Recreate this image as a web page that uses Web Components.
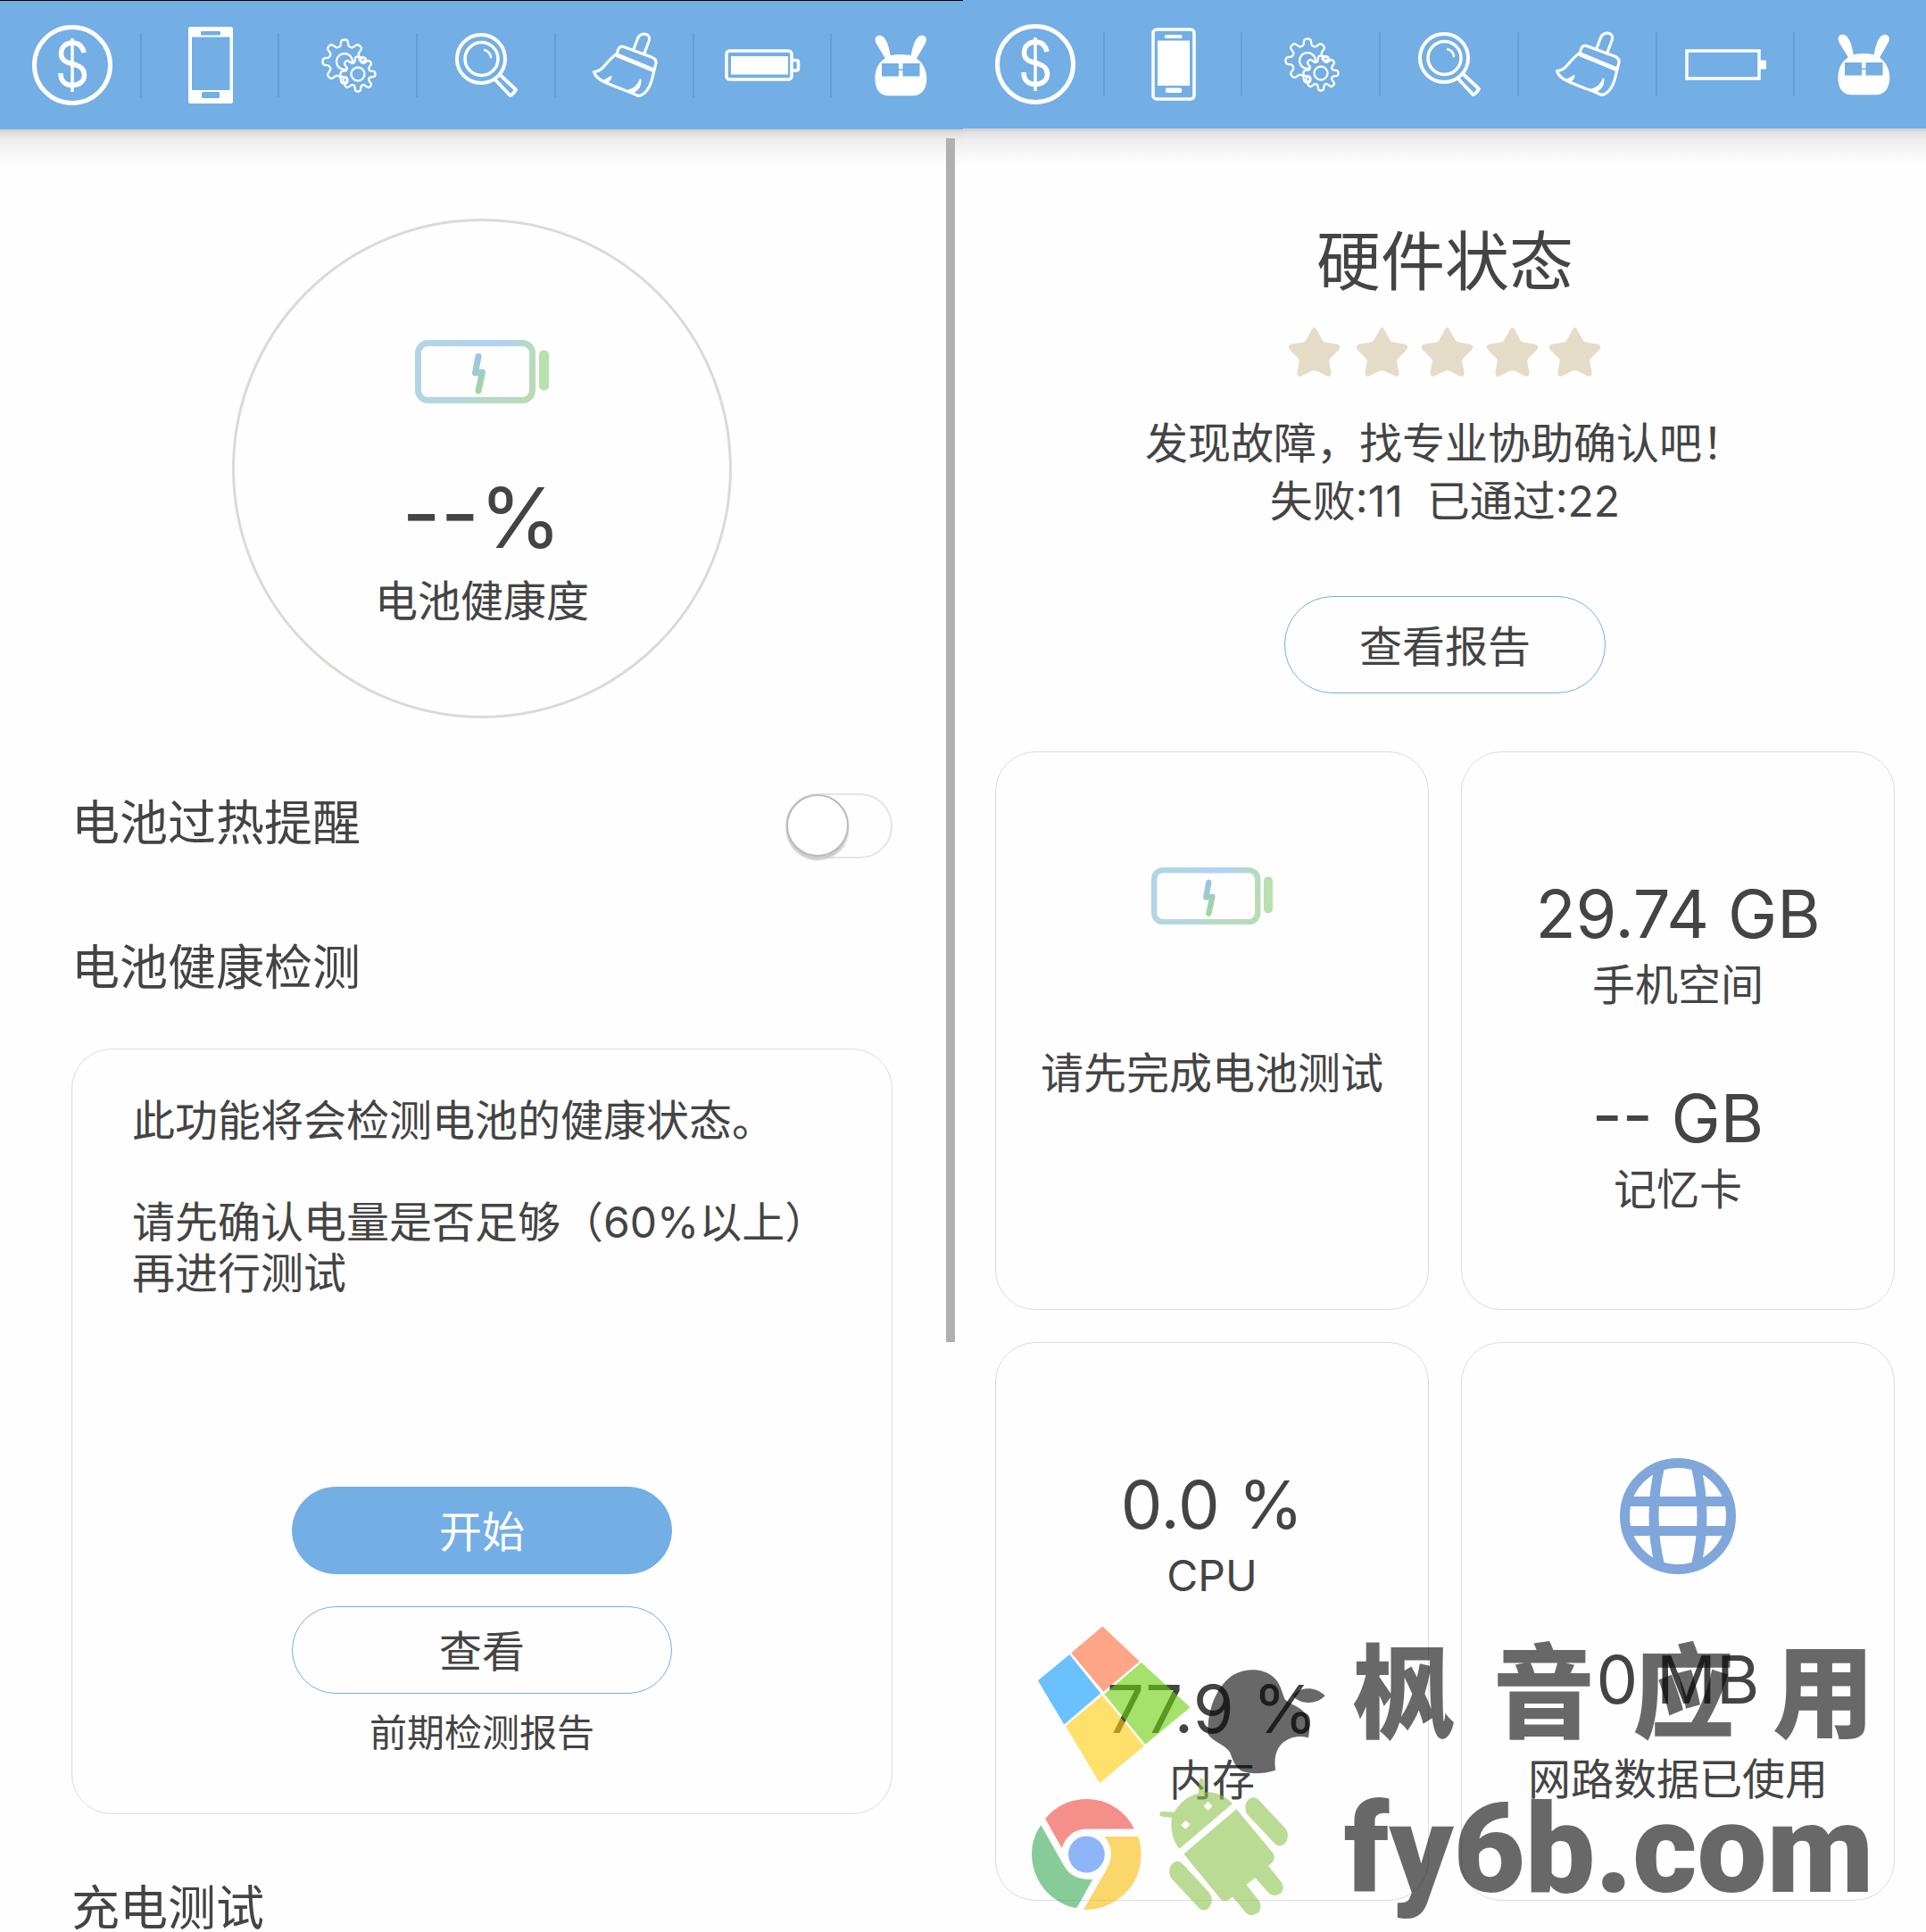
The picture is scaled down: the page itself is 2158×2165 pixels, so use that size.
<!DOCTYPE html>
<html lang="zh-CN">
<head>
<meta charset="utf-8">
<title>硬件状态</title>
<style>
  body {
    margin: 0;
    background: #fefefe;
    color: #444;
    font-family: Inter, "Noto Sans CJK SC", sans-serif;
    font-size: 48px;
  }
</style>
</head>
<body>
<device-page>
  <phone-screen slot="left" scrolled>
    <tool-bar slot="bar" phone="solid" battery="full" topline></tool-bar>
    <battery-panel></battery-panel>
  </phone-screen>
  <phone-screen slot="right">
    <tool-bar slot="bar" phone="outline" battery="empty"></tool-bar>
    <hardware-panel></hardware-panel>
  </phone-screen>
  <brand-mark slot="mark"></brand-mark>
</device-page>

<script>
// outline of a gear with soft teeth
function gearPath(cx, cy, inner, outer, teeth, turn) {
  const mid = (inner + outer) / 2;
  const amp = (outer - inner) / 2;
  let d = '';
  for (let i = 0; i < 240; i++) {
    const a = (i / 240) * Math.PI * 2;
    const r = mid + amp * Math.tanh(2 * Math.cos(teeth * (a - turn))) / Math.tanh(2);
    d += (i ? 'L' : 'M') + (cx + r * Math.cos(a)).toFixed(1) + ' ' + (cy + r * Math.sin(a)).toFixed(1);
  }
  return d + 'Z';
}

const ICONS = {
  coin: `<svg width="92" height="92" fill="none" stroke="#fff">
    <circle cx="46" cy="46" r="42.5" stroke-width="5"/>
    <path stroke-width="5.5" d="M59 32C57.5 25 53 21 46 21C38.5 21 33.5 26 33.5 33C33.5 40 38 42.5 46 44.5C54 46.5 59.5 49.5 59.5 57C59.5 64 54 68.5 46 68.5C38 68.5 33 64 33 55"/>
    <path stroke-width="3.5" d="M46 16V76"/></svg>`,
  phoneSolid: `<svg width="50" height="86">
    <rect width="50" height="86" rx="2.5" fill="#fff"/>
    <g fill="#73aee5"><rect x="4" y="11.5" width="42.5" height="59.5" rx="1"/>
    <rect x="14" y="5" width="22" height="4.5" rx="1"/><rect x="15" y="73" width="20" height="7" rx="1.5"/></g></svg>`,
  phoneOutline: `<svg width="50" height="82">
    <rect x="2" y="2" width="46" height="78" rx="4" fill="none" stroke="#fff" stroke-width="3.5"/>
    <g fill="#fff"><rect x="15" y="8" width="19.5" height="4" rx="1.5"/>
    <rect x="7" y="14.5" width="36" height="50.5"/><rect x="16" y="67.5" width="18" height="5.5" rx="1.5"/></g></svg>`,
  gears: `<svg width="62" height="62" fill="none" stroke="#fff" stroke-width="2.3">
    <path d="${gearPath(26, 27, 17.5, 24.5, 8, 0)}"/><circle cx="26" cy="27" r="9"/>
    <path fill="#73aee5" d="${gearPath(41, 41, 13.5, 19.5, 8, 0)}"/><circle cx="41" cy="41" r="7.5"/>
    <ellipse cx="46" cy="24.5" rx="3.5" ry="2.5"/><ellipse cx="27" cy="48" rx="2.5" ry="3.5"/></svg>`,
  search: `<svg width="72" height="74" fill="none" stroke="#fff">
    <circle cx="30" cy="30" r="27" stroke-width="4"/><circle cx="30.5" cy="30" r="18.5" stroke-width="3.5"/>
    <path stroke-width="2.5" stroke-linecap="round" d="M34 20Q40 22 41 28"/>
    <path stroke-width="3.8" stroke-linejoin="round" d="M52 48.5L69 64.5Q66 70 62.5 71L46 53.5"/></svg>`,
  broom: `<svg width="76" height="76" fill="none" stroke="#fff" stroke-width="3.2" stroke-linejoin="round" stroke-linecap="round">
    <path d="M48 20L53 7C57 1 67 2 65.5 10L59.5 26"/>
    <path d="M29.5 25C30 19 33 16 37 17.5L68 29C73 31 74 34 72.5 38L71 43"/>
    <path stroke-width="5" d="M30 27L70 43.5"/>
    <path d="M28 26C16 35 14 45 3.5 45.5C5 51 9 54 15.5 57C28 63 40 66 53.5 72.5C66 70 69 53 71 43"/>
    <path fill="#fff" stroke-width="2" d="M14 56L22.5 51Q21.5 56 17 57ZM41 67Q52 64 55.5 54.5Q56 65 46 69Z"/></svg>`,
  batteryFull: `<svg width="85" height="36" fill="none" stroke="#fff" stroke-width="3.5">
    <rect x="2" y="2" width="73" height="32" rx="3.5"/><rect x="7" y="8" width="64" height="20.5" fill="#fff" stroke="none"/>
    <path d="M76 12.5H80Q82.5 12.5 82.5 14.5V22Q82.5 24 80 24H76"/></svg>`,
  batteryEmpty: `<svg width="91" height="35" fill="none" stroke="#fff" stroke-width="3.5">
    <rect x="2" y="2" width="81" height="31"/><rect x="84" y="12.5" width="7" height="10" fill="#fff" stroke="none"/></svg>`,
  rabbit: `<svg width="62" height="70">
    <path fill="#fff" d="M14 27.5L4.5 12C-1 3 7 -1 12 3.5C17 9 18 16 20 25ZM49 27.5L58 12C63.5 3 55.5 -1 50.5 3.5C45.5 9 44.5 16 42.5 25Z"/>
    <path fill="#fff" d="M2.4 50C2.4 38 8 31 14 27C20 21.5 42 21.5 48.5 27C54 31 60.3 38 60.3 50C60.3 62 54 69.3 45 69.3H17.5C8 69.3 2.4 62 2.4 50Z"/>
    <path fill="#73aee5" d="M10 33H29V39.5H33.5V33H52.5V47.5H33.5V41H29V47.5H10Z"/></svg>`,
};

customElements.define('device-page', class extends HTMLElement {
  constructor() {
    super();
    this.attachShadow({ mode: 'open' });
    this.shadowRoot.innerHTML = `
      <style>
        :host {
          position: relative;
          display: grid;
          grid-template-columns: 1fr 1fr;
          min-height: 100vh;
        }
      </style>
      <slot name="left"></slot>
      <slot name="right"></slot>
      <slot name="mark"></slot>
    `;
  }
});

customElements.define('phone-screen', class extends HTMLElement {
  constructor() {
    super();
    this.attachShadow({ mode: 'open' });
    this.shadowRoot.innerHTML = `
      <style>
        :host { display: block; position: relative; min-width: 0; }
        .thumb { display: none; }
        :host([scrolled]) .thumb {
          display: block;
          position: absolute;
          top: 155px;
          right: 9px;
          width: 10px;
          height: 1349px;
          background: #b0b0b0;
        }
      </style>
      <slot name="bar"></slot>
      <main><slot></slot></main>
      <div class="thumb"></div>
    `;
  }
});

customElements.define('tool-bar', class extends HTMLElement {
  connectedCallback() {
    this.attachShadow({ mode: 'open' });
    const items = [
      ['收益', ICONS.coin],
      ['手机', this.getAttribute('phone') === 'solid' ? ICONS.phoneSolid : ICONS.phoneOutline],
      ['设置', ICONS.gears],
      ['检测', ICONS.search],
      ['清理', ICONS.broom],
      ['电池', this.getAttribute('battery') === 'full' ? ICONS.batteryFull : ICONS.batteryEmpty],
      ['助手', ICONS.rabbit],
    ];
    this.shadowRoot.innerHTML = `
      <style>
        :host { display: block; position: relative; }
        :host([topline]) { border-top: 1px solid #000; }
        nav {
          display: grid;
          grid-template-columns: repeat(6, 155fr) 147fr;
          height: 144px;
          padding-left: 4px;
          background: #73aee5;
        }
        a {
          display: flex;
          align-items: center;
          justify-content: center;
          position: relative;
        }
        a:last-child { padding-left: 6px; }
        a:not(:last-child)::after {
          content: "";
          position: absolute;
          right: 0;
          top: 36px;
          width: 2px;
          height: 72px;
          background: #669fd1;
        }
        svg { display: block; flex: none; }
        /* drop shadow falls over the content below */
        .shade {
          position: absolute;
          top: 100%;
          left: 0;
          right: 0;
          height: 40px;
          border-top: 3px solid #d4d4d4;
          background: linear-gradient(#dfdfdf, #eee 10px, #f8f8f8 24px, #fefefe);
        }
      </style>
      <nav>${items.map(([name, icon]) => `<a href="#" aria-label="${name}">${icon}</a>`).join('')}</nav>
      <div class="shade"></div>
    `;
  }
});

customElements.define('battery-icon', class extends HTMLElement {
  constructor() {
    super();
    this.attachShadow({ mode: 'open' });
    this.shadowRoot.innerHTML = `
      <style>
        :host { display: block; width: 150px; }
        svg { display: block; width: 100%; }
      </style>
      <svg viewBox="0 0 150 71" fill="none">
        <defs>
          <linearGradient id="body" x1="0" y1="0" x2="135" y2="71" gradientUnits="userSpaceOnUse">
            <stop offset="0" stop-color="#b1d4ec"/><stop offset=".5" stop-color="#b4d7d6"/><stop offset="1" stop-color="#b8dcae"/>
          </linearGradient>
          <radialGradient id="glow" cx="80" cy="3" r="46" gradientUnits="userSpaceOnUse">
            <stop offset="0" stop-color="#b1cfff"/><stop offset="1" stop-color="#b1cfff" stop-opacity="0"/>
          </radialGradient>
          <linearGradient id="bolt" x1="0" y1="15" x2="0" y2="60" gradientUnits="userSpaceOnUse">
            <stop offset="0" stop-color="#9bc2f1"/><stop offset="1" stop-color="#a3d898"/>
          </linearGradient>
        </defs>
        <rect x="3.5" y="3.5" width="128" height="64" rx="11" stroke="url(#body)" stroke-width="7"/>
        <rect x="3.5" y="3.5" width="128" height="64" rx="11" stroke="url(#glow)" stroke-width="7"/>
        <rect x="139" y="11.5" width="11" height="45" rx="5" fill="#b8e0ad"/>
        <path d="M71 18.5L67.5 37L75.5 36L71 57" stroke="url(#bolt)" stroke-width="7" stroke-linecap="round" stroke-linejoin="round"/>
      </svg>
    `;
  }
});

customElements.define('pill-button', class extends HTMLElement {
  constructor() {
    super();
    this.attachShadow({ mode: 'open' });
    this.shadowRoot.innerHTML = `
      <style>
        :host { display: block; width: 426px; height: 98px; }
        button {
          width: 100%;
          height: 100%;
          padding: 0 0 4px;
          border: 1px solid #73aee5;
          border-radius: 54px;
          background: none;
          color: inherit;
          font: inherit;
        }
        :host([primary]) button { background: #73aee5; color: #fff; }
      </style>
      <button type="button"><slot></slot></button>
    `;
  }
});

customElements.define('toggle-row', class extends HTMLElement {
  constructor() {
    super();
    this.attachShadow({ mode: 'open' });
    this.shadowRoot.innerHTML = `
      <style>
        :host { display: block; }
        .row { display: flex; justify-content: space-between; align-items: flex-start; }
        label { padding-top: 6px; font-size: 54px; line-height: 56px; }
        input {
          appearance: none;
          flex: none;
          width: 120px;
          height: 73px;
          margin: 0;
          border: 2px solid #e4e4e4;
          border-radius: 37px;
        }
        input::before {
          content: "";
          display: block;
          box-sizing: border-box;
          width: 70px;
          height: 70px;
          margin: -1px;
          border: 2px solid #bbb;
          border-radius: 50%;
          background: #fff;
          box-shadow: 0 4px 2px #ccc;
        }
      </style>
      <div class="row">
        <label for="toggle"><slot></slot></label>
        <input type="checkbox" id="toggle" role="switch">
      </div>
    `;
  }
});

customElements.define('info-card', class extends HTMLElement {
  constructor() {
    super();
    this.attachShadow({ mode: 'open' });
    this.shadowRoot.innerHTML = `
      <style>
        :host {
          display: flex;
          flex-direction: column;
          align-items: center;
          box-sizing: border-box;
          border: 1px solid #dcdcdc;
          border-radius: 45px;
        }
      </style>
      <slot></slot>
    `;
  }
});

customElements.define('stat-value', class extends HTMLElement {
  constructor() {
    super();
    this.attachShadow({ mode: 'open' });
    this.shadowRoot.innerHTML = `
      <style>
        :host { display: flex; flex-direction: column; align-items: center; gap: 8px; }
        .value { font-size: 74px; line-height: 84px; }
        .label { line-height: 60px; }
        :host([wide]) { gap: 40px; }
      </style>
      <div class="value">${this.getAttribute('value')}</div>
      <div class="label"><slot></slot></div>
    `;
  }
});

customElements.define('star-rating', class extends HTMLElement {
  constructor() {
    super();
    this.attachShadow({ mode: 'open' });
    const star = 'M25.5 3Q28.5 -3 31.5 3L37.5 14Q38.5 16 41 16.5L53 18.5Q59.5 20 56 25L46.5 34.5Q45 36 45.3 38.5L47.5 50Q48 56 43 54.5L32 49Q28.5 47.5 25 49L14 54.5Q9 56 9.5 50L11.7 38.5Q12 36 10.5 34.5L1 25Q-2.5 20 4 18.5L16 16.5Q18.5 16 19.5 14Z';
    this.shadowRoot.innerHTML = `
      <style>
        :host { display: block; }
        svg { display: block; }
      </style>
      <svg width="356" height="55" fill="#e5dcc8">
        ${[3, 79, 152, 225, 295].map(x => `<path transform="translate(${x} 0)" d="${star}"/>`).join('')}
      </svg>
    `;
  }
});

customElements.define('battery-panel', class extends HTMLElement {
  constructor() {
    super();
    this.attachShadow({ mode: 'open' });
    this.shadowRoot.innerHTML = `
      <style>
        :host { display: block; padding: 100px 79px 0 80px; }
        .gauge {
          display: flex;
          flex-direction: column;
          align-items: center;
          box-sizing: border-box;
          width: 560px;
          height: 560px;
          margin: 0 auto;
          padding-top: 133px;
          border: 3px solid #dadad6;
          border-radius: 50%;
        }
        .percent { margin-top: 83px; font-size: 94px; line-height: 90px; }
        .caption { margin-top: 19px; line-height: 60px; }
        toggle-row { margin-top: 84px; }
        h2 { margin: 95px 0 0; font-size: 54px; line-height: 56px; font-weight: 400; }
        h2.next { margin-top: 81px; line-height: 50px; }
        info-card { margin-top: 62px; padding: 51px 67px 65px; gap: 36px; }
        p { align-self: stretch; margin: 0 0 175px; line-height: 57px; white-space: pre-line; }
        .note { margin-top: -17px; font-size: 42px; line-height: 50px; }
      </style>
      <div class="gauge">
        <battery-icon></battery-icon>
        <div class="percent">--%</div>
        <div class="caption">电池健康度</div>
      </div>
      <toggle-row>电池过热提醒</toggle-row>
      <h2>电池健康检测</h2>
      <info-card>
        <p>此功能将会检测电池的健康状态。

请先确认电量是否足够（60%以上）再进行测试</p>
        <pill-button primary>开始</pill-button>
        <pill-button>查看</pill-button>
        <div class="note">前期检测报告</div>
      </info-card>
      <h2 class="next">充电测试</h2>
    `;
  }
});

customElements.define('hardware-panel', class extends HTMLElement {
  constructor() {
    super();
    this.attachShadow({ mode: 'open' });
    this.shadowRoot.innerHTML = `
      <style>
        :host {
          display: flex;
          flex-direction: column;
          align-items: center;
          padding: 104px 35px 0 36px;
        }
        h1 { margin: 0; font-size: 72px; line-height: 90px; font-weight: 400; }
        star-rating { margin-top: 29px; }
        p { margin: 42px 0 0; line-height: 65px; text-align: center; }
        pill-button { width: 360px; height: 109px; margin-top: 74px; }
        .cards {
          align-self: stretch;
          display: grid;
          grid-template-columns: 1fr 1fr;
          grid-auto-rows: 626px;
          gap: 36px;
          margin-top: 65px;
        }
        .values { padding-top: 139px; gap: 77px; }
        .media { padding-top: 129px; }
        .media battery-icon { width: 136px; }
        .hint { margin-top: 137px; line-height: 60px; }
        .media stat-value { margin-top: 76px; }
      </style>
      <h1>硬件状态</h1>
      <star-rating></star-rating>
      <p>发现故障，找专业协助确认吧！<br>失败:11&nbsp; 已通过:22</p>
      <pill-button>查看报告</pill-button>
      <div class="cards">
        <info-card class="media">
          <battery-icon></battery-icon>
          <div class="hint">请先完成电池测试</div>
        </info-card>
        <info-card class="values">
          <stat-value value="29.74 GB">手机空间</stat-value>
          <stat-value value="-- GB">记忆卡</stat-value>
        </info-card>
        <info-card class="values">
          <stat-value value="0.0 %">CPU</stat-value>
          <stat-value value="77.9 %">内存</stat-value>
        </info-card>
        <info-card class="media">
          <svg width="130" height="130" fill="none" stroke="#80a7dc" stroke-width="11">
            <circle cx="65" cy="65" r="59.5"/>
            <path d="M45 8Q31 65 45 122M85 8Q99 65 85 122M8 48.5H122M8 81.5H122"/>
          </svg>
          <stat-value wide value="0 MB">网路数据已使用</stat-value>
        </info-card>
      </div>
    `;
  }
});

customElements.define('brand-mark', class extends HTMLElement {
  constructor() {
    super();
    this.attachShadow({ mode: 'open' });
    this.shadowRoot.innerHTML = `
      <style>
        :host {
          position: absolute;
          right: 58px;
          bottom: 18px;
          display: flex;
          align-items: flex-end;
          gap: 20px;
          opacity: .6;
          color: #050505;
          pointer-events: none;
        }
        .words { width: 594px; }
        .name {
          display: flex;
          justify-content: space-between;
          padding-left: 10px;
          font: 900 114px/144px "Noto Sans CJK SC", sans-serif;
        }
        .site { margin-top: 38px; font: 900 139px/148px Roboto, sans-serif; }
      </style>
      <svg width="331" height="325" viewBox="160 784 960 744" preserveAspectRatio="none">
        <path fill="#ff6939" d="M393 785L513 875L396 953L291 853Z"/>
        <path fill="#0899ff" d="M286 857L387 957L268 1037L183 924Z"/>
        <path fill="#6bd00a" d="M519 878L678 993L532 1088L399 959Z"/>
        <path fill="#ffcd0a" d="M392 962L528 1092L384 1187L273 1041Z"/>
        <path fill="#050505" d="M736 1062C732 1000 765 935 820 909C860 892 915 892 948 915C970 930 975 950 985 972C1000 985 1025 988 1045 1003C1066 1020 1069 1040 1062 1071C1030 1063 1000 1070 980 1083C955 1100 950 1125 955 1154C920 1163 880 1165 850 1158C825 1150 815 1125 807 1108C790 1088 755 1083 736 1062Z"/>
        <path fill="#050505" d="M1012 963C1035 939 1085 939 1116 963C1090 986 1035 987 1012 963Z"/>
        <path fill="#ee483d" d="M207 1279C240 1245 290 1228 341 1228C405 1228 465 1255 496 1305H341C300 1306 272 1325 261 1354Z"/>
        <path fill="#39aa57" d="M193 1295L268 1400C285 1425 320 1437 361 1434L313 1502Q309 1509 300 1507C215 1490 163 1430 163 1370C163 1340 175 1315 193 1295Z"/>
        <path fill="#fabc0a" d="M398 1324H504Q510 1324 512 1330C528 1380 512 1430 480 1458C440 1495 385 1514 331 1512L405 1410C428 1380 425 1345 398 1324Z"/>
        <ellipse cx="341" cy="1370" rx="59" ry="47" fill="#4485f5"/>
        <g fill="#8dc54d">
          <path fill-rule="evenodd" d="M643 1356C620 1335 612 1300 619 1276L584 1273Q573 1267 584 1260L626 1262C640 1240 670 1220 705 1213L708 1180Q714 1168 722 1180L725 1211C760 1208 795 1222 815 1240ZM663 1283L678 1293L663 1306L648 1295ZM736 1235L750 1246L736 1258L721 1246Z"/>
          <path d="M828 1254L945 1365Q958 1380 945 1390L932 1400L975 1442Q985 1455 975 1468Q955 1482 935 1471L889 1430L860 1448L903 1490Q912 1505 900 1519Q880 1532 860 1521L816 1479L802 1487Q788 1494 776 1484L657 1369Z"/>
        </g>
        <path fill="none" stroke="#8dc54d" stroke-width="52" stroke-linecap="round" d="M883 1250L969 1322M636 1414L722 1487"/>
      </svg>
      <div class="words">
        <div class="name"><span>枫</span><span>音</span><span>应</span><span>用</span></div>
        <div class="site">fy6b.com</div>
      </div>
    `;
  }
});
</script>
</body>
</html>
